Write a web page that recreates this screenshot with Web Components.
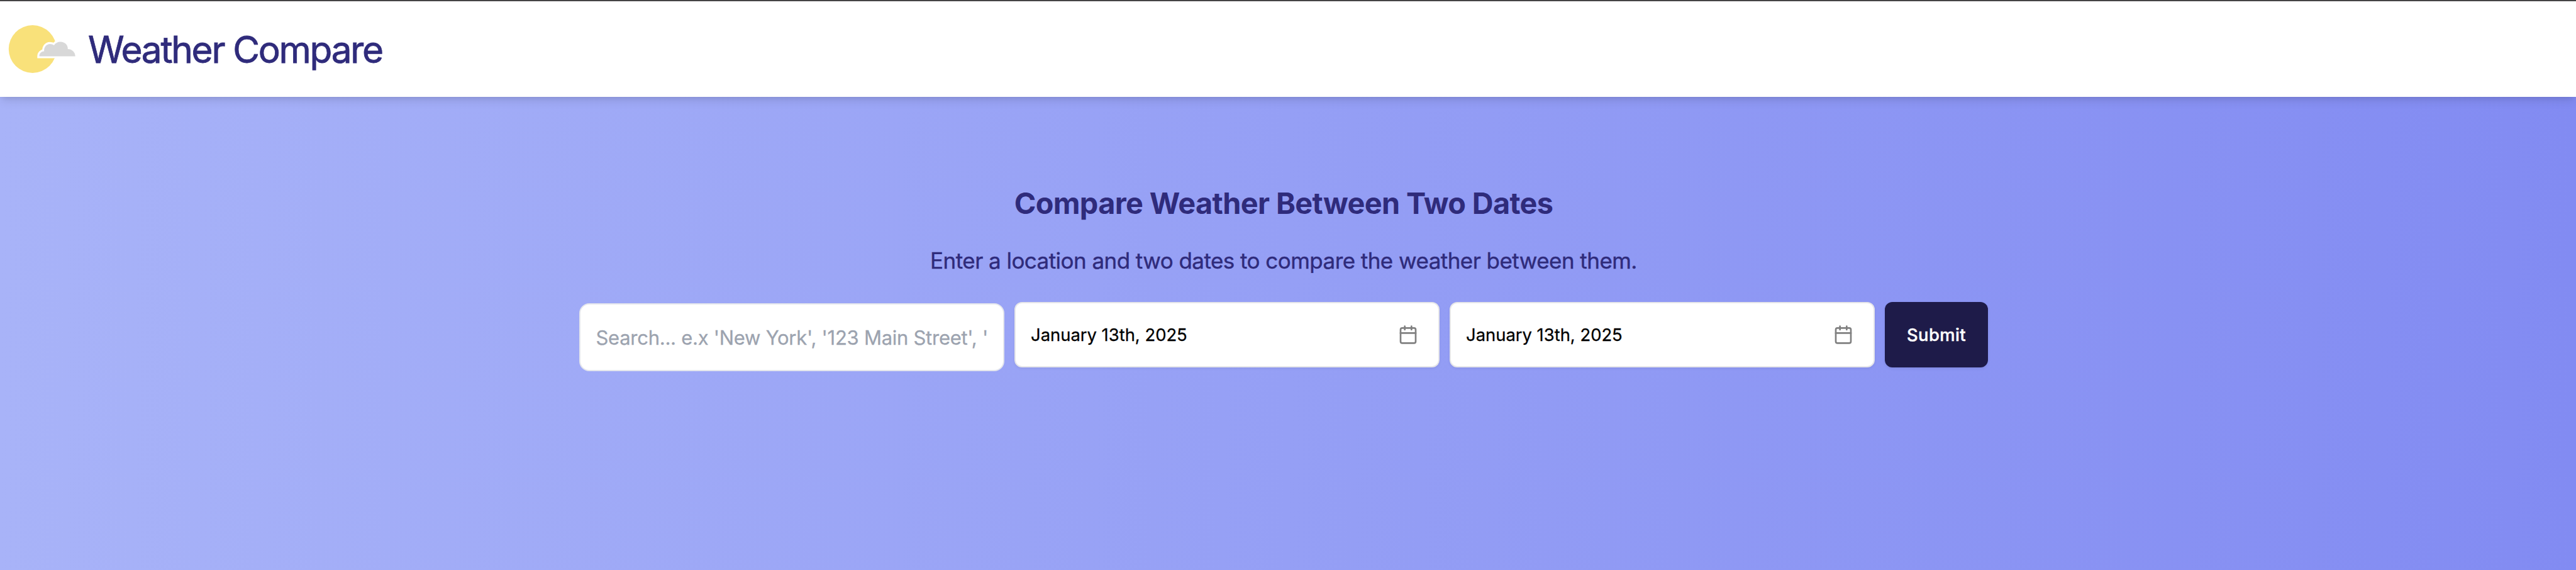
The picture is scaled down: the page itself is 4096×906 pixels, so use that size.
<!DOCTYPE html>
<html lang="en">
<head>
<meta charset="utf-8">
<title>Weather Compare</title>
<style>
html,body{margin:0;height:100%}
body{font-family:Inter,"Liberation Sans",sans-serif;overflow:hidden}
</style>
</head>
<body>
<weather-app></weather-app>
<script>
const define = (name, html) => customElements.define(name, class extends HTMLElement {
  constructor() {
    super();
    const t = document.createElement('template');
    t.innerHTML = html;
    this.attachShadow({mode: 'open'}).append(t.content.cloneNode(true));
  }
});

define('weather-logo', `
<style>:host{display:block;width:108px;height:78px;flex:none}svg{display:block}</style>
<svg width="108" height="78" viewBox="13 39 108 78">
  <circle cx="51.8" cy="78" r="38" fill="#f9e17a"/>
  <path d="M62.5 89.4C62.5 85 65.5 81.8 70.2 81.5C69.5 75.5 73.5 69.9 79.5 69.9C82 69.9 84.3 70.6 86 71.9C88 68.5 92 66.5 96.5 66.5C103 66.5 108.2 71.5 107.8 78.1C114.5 78.1 119.5 83 119.7 89.4Z" fill="#d8d8d8" stroke="#fff" stroke-width="6.4" paint-order="stroke"/>
</svg>`);

define('app-header', `
<style>
:host{display:flex;align-items:center;gap:19px;box-sizing:border-box;height:154px;padding-left:13px;
background:#fff;border-top:2px solid #454445;color:#2f2b7b;position:relative;
box-shadow:0 8px 14px -2px rgb(0 0 0/.1),0 4px 8px -4px rgb(0 0 0/.1)}
h1{margin:1px 0 0;font-weight:400;font-size:58.5px;line-height:72px;letter-spacing:-2.27px;white-space:nowrap;-webkit-text-stroke:.8px currentColor}
</style>
<weather-logo></weather-logo><h1><slot></slot></h1>`);

define('search-box', `
<style>
:host{display:flex;align-items:center;box-sizing:border-box;width:676px;height:108px;margin-top:2px;padding:1px 24px 0 24.5px;
background:#fff;border:2px solid #e4e6ec;border-radius:16px;color:#9ca3af;overflow:hidden}
span{font-size:31px;line-height:48px;letter-spacing:-.27px;white-space:pre;overflow:hidden;-webkit-text-stroke:.3px currentColor}
</style>
<span><slot></slot></span>`);

define('date-picker', `
<style>
:host{display:flex;align-items:center;justify-content:space-between;box-sizing:border-box;width:676px;height:104px;padding:0 32.5px 0 24px;
background:#fff;border:2px solid #e6e6e9;border-radius:12px;color:#000;box-shadow:0 2px 4px rgb(0 0 0/.05)}
span{font-size:27.4px;line-height:40px;letter-spacing:0;white-space:nowrap;-webkit-text-stroke:.3px currentColor}
svg{display:block;width:32px;height:32px}
</style>
<span><slot></slot></span>
<svg viewBox="0 0 24 24" fill="none" stroke="#808080" stroke-width="2" stroke-linecap="round" stroke-linejoin="round"><path d="M8 2v4M16 2v4"/><rect width="18" height="18" x="3" y="4" rx="2"/><path d="M3 10h18"/></svg>`);

define('submit-button', `
<style>
:host{display:flex;align-items:center;justify-content:center;width:164px;height:104px;border-radius:12px;background:#1e1b49;
color:#fff;box-shadow:0 2px 4px rgb(0 0 0/.08)}
span{font-size:27.4px;font-weight:500;line-height:40px;letter-spacing:.4px;-webkit-text-stroke:.4px currentColor}
</style>
<span><slot></slot></span>`);

define('compare-form', `
<style>
:host{display:flex;flex-direction:column;align-items:center;box-sizing:border-box;padding:139px 14px 0 0;color:#2f2b7b}
h2{margin:0;font-size:46.8px;font-weight:700;line-height:60px;letter-spacing:-.62px;white-space:nowrap}
p{margin:33px 0 38px;font-size:35px;line-height:56px;letter-spacing:-.55px;white-space:nowrap;-webkit-text-stroke:.4px currentColor}
.row{display:flex;align-items:flex-start;gap:16px}
</style>
<h2>Compare Weather Between Two Dates</h2>
<p>Enter a location and two dates to compare the weather between them.</p>
<div class="row">
  <search-box>Search... e.x 'New York', '123 Main Street', '</search-box>
  <date-picker>January 13th, 2025</date-picker>
  <date-picker>January 13th, 2025</date-picker>
  <submit-button>Submit</submit-button>
</div>`);

define('weather-app', `
<style>
:host{display:flex;flex-direction:column;width:4096px;height:906px;background:linear-gradient(90deg,#a8b3f8,#828bf2)}
</style>
<app-header>Weather Compare</app-header>
<compare-form></compare-form>`);
</script>
</body>
</html>
